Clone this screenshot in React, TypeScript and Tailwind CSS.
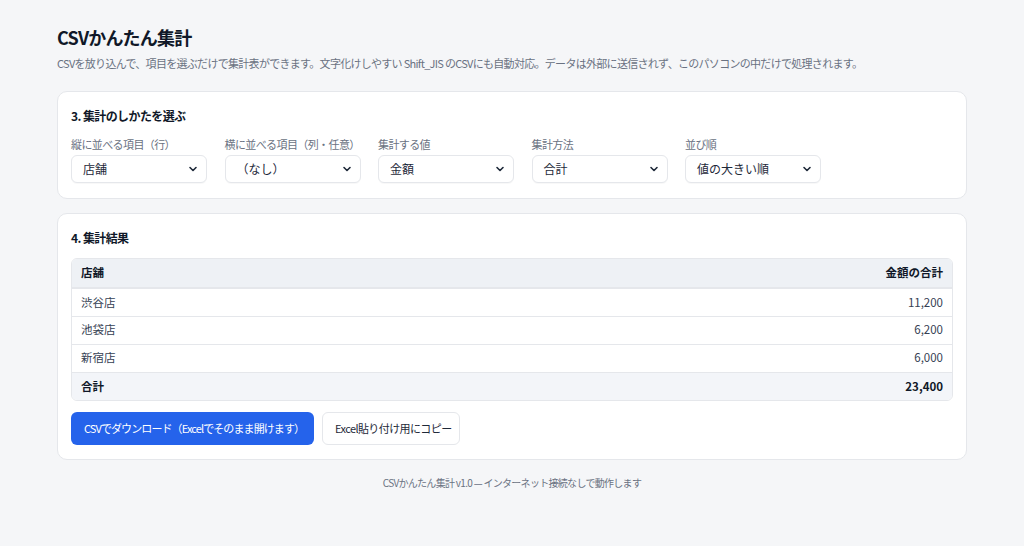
import { ChevronDown } from 'lucide-react';

const font = { fontFamily: '"Noto Sans CJK JP", "Noto Sans", sans-serif' };

const fields = [
  { label: '縦に並べる項目（行）', value: '店舗' },
  { label: '横に並べる項目（列・任意）', value: '（なし）' },
  { label: '集計する値', value: '金額' },
  { label: '集計方法', value: '合計' },
  { label: '並び順', value: '値の大きい順' },
];

const rows = [
  { name: '渋谷店', total: '11,200' },
  { name: '池袋店', total: '6,200' },
  { name: '新宿店', total: '6,000' },
];

function SelectBox({ label, value }: { label: string; value: string }) {
  return (
    <div className="flex w-[136px] flex-col">
      <span className="mb-[3px] whitespace-nowrap text-[11px] leading-[16px] tracking-[-0.6px] text-gray-500">{label}</span>
      <div className="flex h-[28px] items-center justify-between rounded-md border border-gray-200 bg-white pl-[11px] pr-[7px] shadow-[0_1px_1px_rgba(0,0,0,0.03)]">
        <span className="text-[12px] text-gray-800">{value}</span>
        <ChevronDown className="h-[12px] w-[12px] text-gray-800" strokeWidth={3.2} />
      </div>
    </div>
  );
}

export default function App() {
  return (
    <div className="min-h-[546px] bg-[#f5f6f8] text-gray-900" style={font}>
      <div className="mx-auto w-[910px] pt-[22px]">
        <h1 className="text-[18px] font-bold leading-[30px] tracking-[-0.8px] text-gray-900">CSVかんたん集計</h1>
        <p className="mt-[2px] whitespace-nowrap text-[11px] leading-[18px] tracking-[-0.7px] text-gray-500">
          CSVを放り込んで、項目を選ぶだけで集計表ができます。文字化けしやすい Shift_JIS のCSVにも自動対応。データは外部に送信されず、このパソコンの中だけで処理されます。
        </p>

        <section className="mt-[19px] rounded-[10px] border border-gray-200 bg-white px-[13px] pb-[15px] pt-[14px]">
          <h2 className="text-[12px] font-bold leading-[20px] tracking-[-0.6px] text-gray-900">3. 集計のしかたを選ぶ</h2>
          <div className="mt-[10px] flex gap-[17.5px]">
            {fields.map((f) => (
              <SelectBox key={f.label} label={f.label} value={f.value} />
            ))}
          </div>
        </section>

        <section className="mt-[14px] rounded-[10px] border border-gray-200 bg-white px-[13px] pb-[14px] pt-[14px]">
          <h2 className="text-[12px] font-bold leading-[20px] tracking-[-0.6px] text-gray-900">4. 集計結果</h2>
          <div className="mt-[10px] overflow-hidden rounded-md border border-gray-200">
            <table className="w-full border-collapse text-[11.5px]">
              <thead>
                <tr className="bg-[#eef1f5]">
                  <th className="h-[29px] border-b-2 border-gray-200 px-[9px] text-left font-bold text-gray-900">店舗</th>
                  <th className="h-[29px] border-b-2 border-gray-200 px-[9px] text-right font-bold text-gray-900">金額の合計</th>
                </tr>
              </thead>
              <tbody>
                {rows.map((r) => (
                  <tr key={r.name} className="border-b border-gray-200">
                    <td className="h-[28px] px-[9px] text-gray-700">{r.name}</td>
                    <td className="h-[28px] px-[9px] text-right text-gray-700">{r.total}</td>
                  </tr>
                ))}
                <tr className="bg-[#f3f5f9]">
                  <td className="h-[28px] px-[9px] font-bold text-gray-900">合計</td>
                  <td className="h-[28px] px-[9px] text-right font-bold text-gray-900">23,400</td>
                </tr>
              </tbody>
            </table>
          </div>
          <div className="mt-[11px] flex gap-[8px]">
            <button className="h-[33px] w-[243px] whitespace-nowrap rounded-md bg-[#2563eb] px-[13px] text-[11px] tracking-[-0.9px] text-white">
              CSVでダウンロード（Excelでそのまま開けます）
            </button>
            <button className="h-[33px] w-[138px] whitespace-nowrap rounded-md border border-gray-200 bg-white px-[12px] text-[11px] tracking-[-0.6px] text-gray-800">
              Excel貼り付け用にコピー
            </button>
          </div>
        </section>

        <p className="mt-[15px] text-center text-[10px] tracking-[-0.7px] text-gray-500">
          CSVかんたん集計 v1.0 — インターネット接続なしで動作します
        </p>
      </div>
    </div>
  );
}
